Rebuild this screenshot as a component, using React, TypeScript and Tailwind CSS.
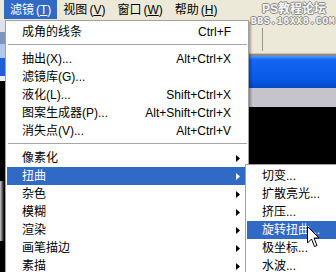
import React from "react";

type ItemProps = {
  label: string;
  shortcut?: string;
  arrow?: boolean;
  active?: boolean;
};

function Arrow() {
  return (
    <svg width="4" height="7" viewBox="0 0 4 7" className="shrink-0">
      <polygon points="0,0 4,3.5 0,7" fill="currentColor" />
    </svg>
  );
}

function Item({ label, shortcut, arrow, active }: ItemProps) {
  return (
    <div
      className={`flex items-center h-[18px] mx-[1px] pl-[15px] ${
        arrow ? "pr-[7px]" : "pr-[16px]"
      } ${active ? "bg-[#316ac5] text-white" : "text-black"}`}
    >
      <span className="flex-1 whitespace-nowrap leading-[18px]">{label}</span>
      {shortcut && (
        <span className="whitespace-nowrap leading-[18px]">{shortcut}</span>
      )}
      {arrow && <Arrow />}
    </div>
  );
}

function Separator() {
  return (
    <div className="h-[9px] pt-[3px] ml-[2px] mr-[1px]">
      <div className="h-[1px] bg-[#a6a6a6]" />
    </div>
  );
}

function MenuTitle({
  label,
  k,
  active,
}: {
  label: string;
  k: string;
  active?: boolean;
}) {
  return (
    <div
      className={`flex items-center px-[6px] h-[19px] whitespace-nowrap ${
        active ? "bg-[#316ac5] text-white" : "text-black"
      }`}
    >
      <span>{label}</span>
      <span className="ml-[2px]">
        (<span className="underline">{k}</span>)
      </span>
    </div>
  );
}

export default function App() {
  return (
    <div className="relative w-[336px] h-[272px] overflow-hidden bg-black text-[12px] [font-family:'Liberation_Sans','Noto_Sans_CJK_SC',sans-serif]">
      {/* menu bar */}
      <div className="flex h-[20px] bg-[#ece9d8] pl-[4px]">
        <MenuTitle label="滤镜" k="T" active />
        <MenuTitle label="视图" k="V" />
        <MenuTitle label="窗口" k="W" />
        <MenuTitle label="帮助" k="H" />
      </div>

      {/* background body */}
      <div className="flex h-[252px]">
        <div className="w-[5px] flex flex-col">
          <div className="h-[12px] bg-[#dfe2ea]" />
          <div className="h-[12px] bg-[#7e95c4]" />
          <div className="h-[14px] bg-[#b4c6ea]" />
          <div className="h-[18px] bg-[#1f5ed8]" />
          <div className="h-[5px] bg-[#e8eefc]" />
          <div className="h-[100px] bg-black" />
          <div className="h-[60px] bg-gradient-to-r from-[#d0d0d0] to-black" />
          <div className="flex-1 bg-black" />
        </div>
        <div className="flex-1 bg-black" />
        <div className="w-[88px] flex flex-col">
          <div className="h-[33px] bg-[#ece9d8] flex pt-[8px] pl-[14px]">
            <div className="w-[1px] h-[23px] bg-[#9a978a]" />
          </div>
          <div className="h-[1px] bg-[#c9c6b6]" />
          <div className="h-[2px] bg-[#8c8a80]" />
          <div className="h-[32px] bg-[linear-gradient(to_bottom,#4a98ff_0%,#1566f2_12%,#0a5ae8_70%,#0648c8_100%)]" />
          <div className="h-[19px] bg-[#c5c4cc]" />
          <div className="flex-1 bg-black" />
        </div>
      </div>

      {/* watermark */}
      <div className="absolute left-[252px] top-[3px] w-[82px] flex flex-col items-center text-[#f6f6f6] font-bold [text-shadow:1px_0_#8a8a8a,-1px_0_#8a8a8a,0_1px_#8a8a8a,0_-1px_#8a8a8a]">
        <div className="text-[12px] leading-[13px] ml-[2px]">PS教程论坛</div>
        <div className="text-[10px] leading-[12px] tracking-[0.5px] [font-family:'Liberation_Mono',monospace]">
          BBS.16XX8.COM
        </div>
      </div>

      {/* main dropdown menu */}
      <div className="absolute left-[5px] top-[20px] w-[244px] bg-white border border-[#a0a0a0] pt-[2px] shadow-[2px_2px_2px_rgba(0,0,0,0.3)] flex flex-col">
        <Item label="成角的线条" shortcut="Ctrl+F" />
        <Separator />
        <Item label="抽出(X)..." shortcut="Alt+Ctrl+X" />
        <Item label="滤镜库(G)..." />
        <Item label="液化(L)..." shortcut="Shift+Ctrl+X" />
        <Item label="图案生成器(P)..." shortcut="Alt+Shift+Ctrl+X" />
        <Item label="消失点(V)..." shortcut="Alt+Ctrl+V" />
        <Separator />
        <Item label="像素化" arrow />
        <Item label="扭曲" arrow active />
        <Item label="杂色" arrow />
        <Item label="模糊" arrow />
        <Item label="渲染" arrow />
        <Item label="画笔描边" arrow />
        <Item label="素描" arrow />
      </div>

      {/* submenu */}
      <div className="absolute left-[245px] top-[164px] w-[120px] bg-white border border-[#a0a0a0] pt-[2px] flex flex-col">
        <Item label="切变..." />
        <Item label="扩散亮光..." />
        <Item label="挤压..." />
        <Item label="旋转扭曲..." active />
        <Item label="极坐标..." />
        <Item label="水波..." />
      </div>

      {/* mouse cursor */}
      <svg
        className="absolute left-[307px] top-[226px]"
        width="13"
        height="22"
        viewBox="0 0 13 22"
      >
        <path
          d="M0.5,0.5 L0.5,17 L4.5,13 L7.5,20.5 L10,19.5 L7,12 L12,12 Z"
          fill="white"
          stroke="black"
          strokeWidth="1"
          strokeLinejoin="miter"
        />
      </svg>
    </div>
  );
}
